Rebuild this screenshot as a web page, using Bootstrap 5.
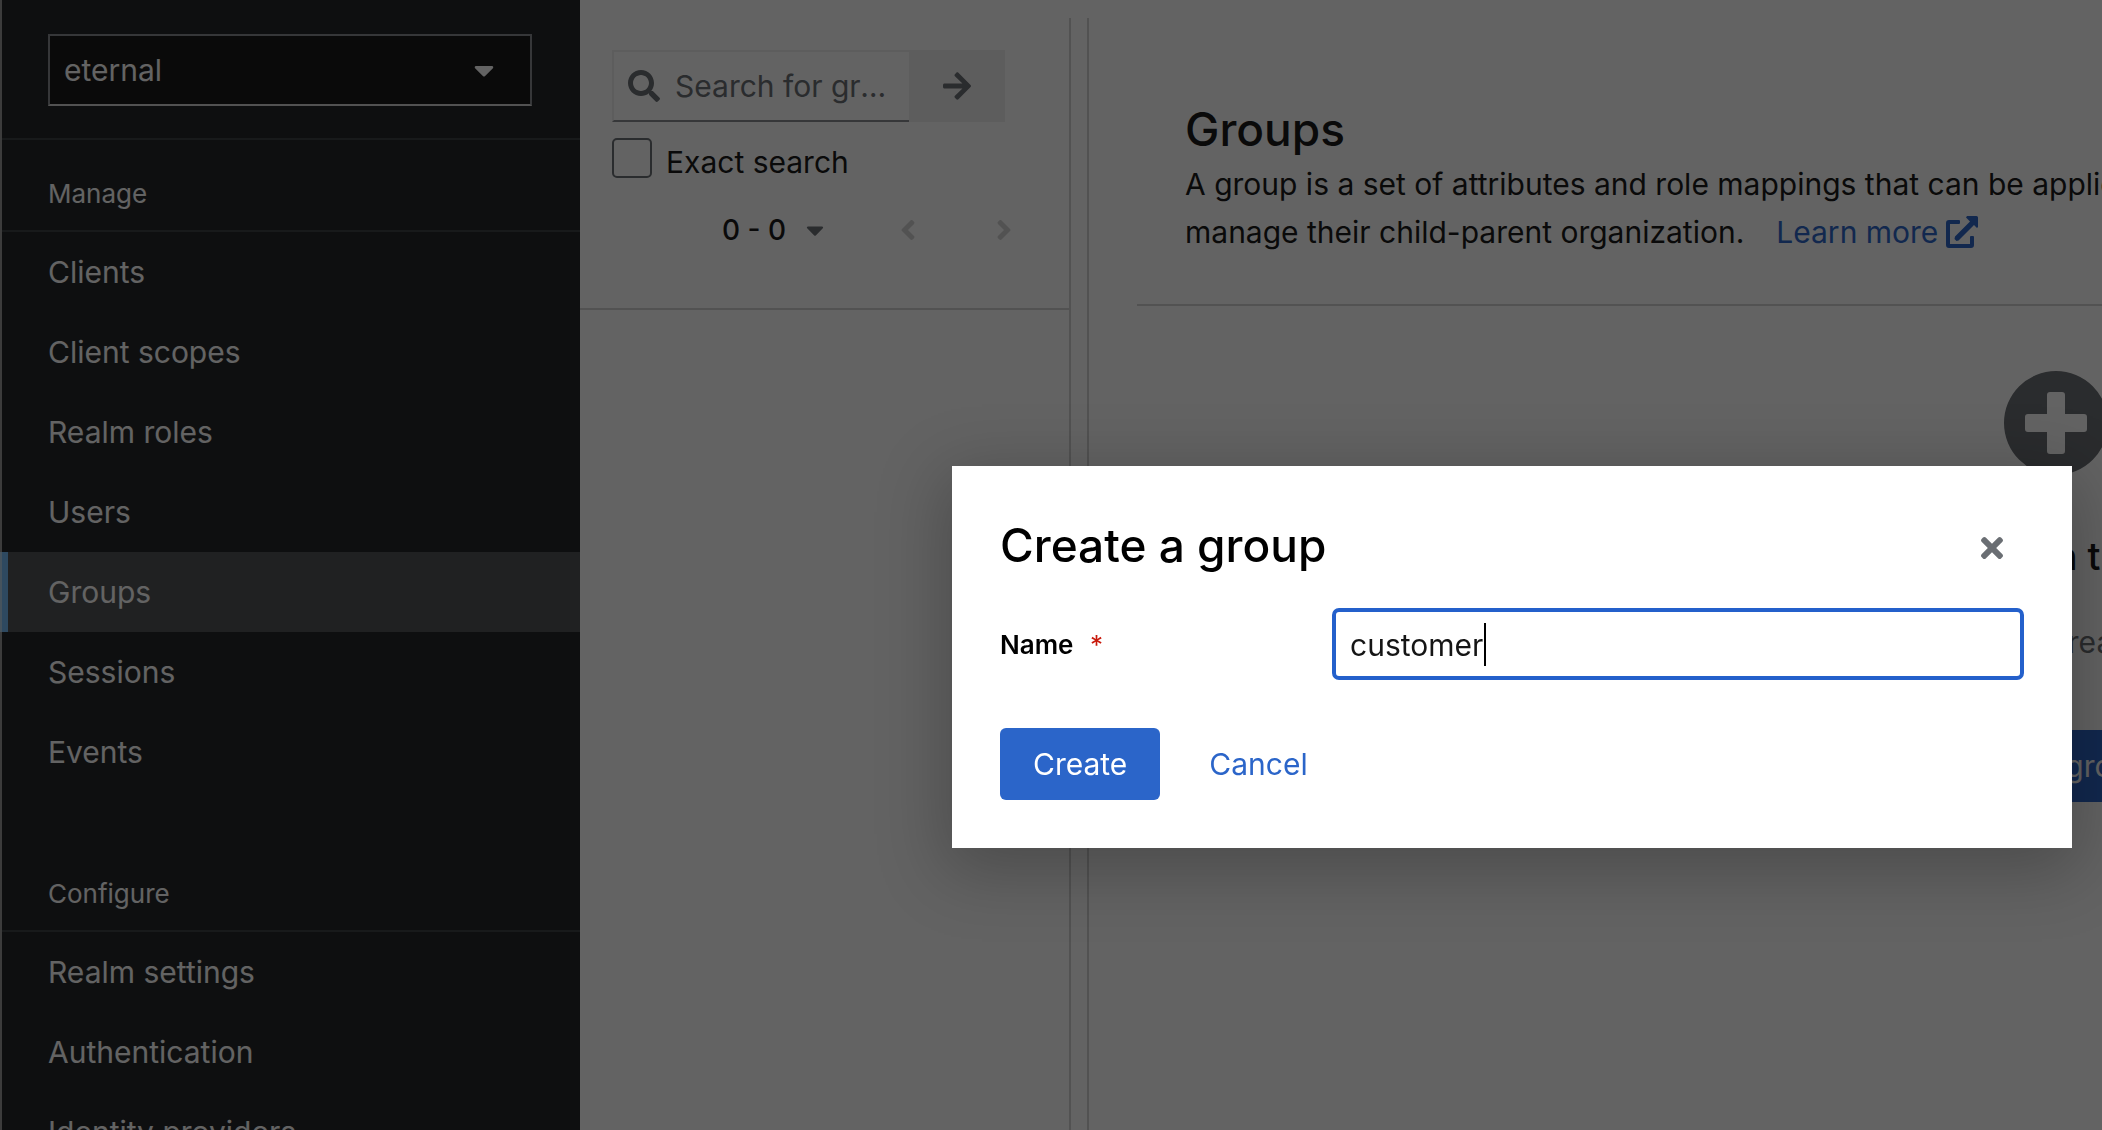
<!DOCTYPE html>
<html lang="en">
<head>
<meta charset="utf-8">
<meta name="viewport" content="width=device-width, initial-scale=1">
<title>Groups - Create a group</title>
<link href="https://cdn.jsdelivr.net/npm/bootstrap@5.3.0/dist/css/bootstrap.min.css" rel="stylesheet">
<style>
  :root {
    --canvas-w: calc(100vw + 922px);
    --kc-blue: #2b65c9;
    --kc-ink: #151515;
    --kc-muted: #6a6e73;
    --kc-line: #d2d2d2;
  }
  body {
    font-family: Inter, "Noto Sans", sans-serif;
    font-size: 30px;
    line-height: 48px;
    color: var(--kc-ink);
    background: #fff;
    overflow: hidden;
  }
  svg { fill: currentColor; display: block; }
  .shell { width: var(--canvas-w); height: 100vh; overflow: hidden; }

  /* sidebar */
  .sidebar { flex: 0 0 580px; background: #212427; color: #fff; border-left: 2px solid #9a9a9a; }
  .realm-box { padding: 34px 48px 32px 46px; border-bottom: 2px solid #3c3f42; }
  .realm-select {
    height: 72px; padding: 0 60px 0 14px; border-radius: 0;
    font-size: 30px; color: #fff; background: #151515;
    border: 2px solid #8a8d90; border-bottom-color: var(--kc-line);
  }
  .realm-caret { right: 38px; pointer-events: none; }
  .nav-heading { font-size: 26px; line-height: 42px; font-weight: 400; margin: 0; padding: 33px 46px 15px; border-bottom: 2px solid #3c3f42; }
  .side-nav .nav-link { color: #fff; padding: 16px 46px; border-radius: 0; }
  .side-nav .nav-link.active { background: #4f5255; box-shadow: inset 6px 0 0 #73bcf7; margin-left: -2px; border-left: 2px solid #b4d4ee; }

  /* group tree panel */
  .tree-panel { flex: 0 0 489px; }
  .tree-tools { padding: 50px 0 0 32px; height: 310px; border-bottom: 2px solid var(--kc-line); }
  .search-row { width: 393px; height: 72px; flex-wrap: nowrap; }
  .search-box { border: 2px solid #f0f0f0; border-right-width: 0; border-bottom-color: #8a8d90; padding-left: 14px; color: var(--kc-muted); }
  .search-box .form-control { border: 0; padding: 0 16px 0 15px; font-size: 30px; background: transparent; text-overflow: ellipsis; }
  .search-box .form-control::placeholder { color: var(--kc-muted); }
  .search-go { flex: 0 0 96px; background: #f0f0f0; color: var(--kc-muted); border-radius: 0; }
  .exact-row { margin-top: 16px; padding: 0; gap: 14px; min-height: 0; }
  .exact-row .form-check-input { width: 40px; height: 40px; margin: 0; float: none; border: 2px solid var(--kc-muted); border-radius: 5px; }
  .exact-row label { padding-top: 4px; line-height: 40px; }
  .pager { font-size: 28px; font-weight: 500; margin-top: 24px; padding-left: 110px; gap: 80px; }
  .pager button { padding: 0; border: 0; color: var(--kc-line); }
  .pager .per-page { font-size: 28px; font-weight: 500; line-height: 48px; color: var(--kc-ink); gap: 20px; margin-right: -4px; }
  .pager .per-page svg { color: var(--kc-muted); }
  .splitter { flex: 0 0 20px; margin-top: 18px; border: solid var(--kc-line); border-width: 0 2px; }

  /* main content */
  .page-title { font-size: 46px; line-height: 62px; font-weight: 500; margin: 0; }
  .page-head { padding: 98px 96px 48px; }
  .page-rule { margin-left: 48px; border-bottom: 2px solid var(--kc-line); }
  .kc-link { color: var(--kc-blue); text-decoration: none; }
  .empty { padding: 65px 2px 0 0; }
  .empty svg { color: var(--kc-muted); }
  .empty h2 { font-size: 38px; line-height: 48px; font-weight: 500; margin: 57px 0 0; }
  .empty p { color: var(--kc-muted); margin: 38px 0 64px; padding-right: 12px; }
  .kc-btn { font-size: 30px; line-height: 48px; padding: 12px 33px; border: 0; border-radius: 6px; }
  .kc-btn.btn-primary { background: var(--kc-blue); color: #fff; }

  /* dialog */
  .modal-backdrop.show { opacity: 1; background: rgba(3, 3, 3, .62); width: 100vw; }
  .modal { width: var(--canvas-w); overflow: hidden; }
  .modal-dialog { max-width: 1120px; margin: 466px auto 0; }
  .modal-content { border: 0; border-radius: 0; padding: 48px; color: #000; box-shadow: 0 16px 64px 8px rgba(3, 3, 3, .24); }
  .modal-title { font-size: 46px; line-height: 62px; font-weight: 500; }
  .close-x { color: var(--kc-muted); padding: 14px 21px 8px; }
  .name-row { margin-top: 32px; }
  .name-label { flex: 0 0 332px; font-size: 26px; font-weight: 600; padding-top: 2px; }
  .req { color: #c9190b; margin-left: 10px; font-weight: 400; }
  .name-input.form-control { height: 72px; border: 4px solid #2460cb; border-radius: 7px; padding: 1px 14px 0; font-size: 30px; color: var(--kc-ink); box-shadow: none; }
  .text-caret { left: 152px; top: 15px; width: 2px; height: 43px; background: #000; }
  .form-actions { margin-top: 48px; gap: 16px; }
</style>
</head>
<body>
<div class="shell d-flex">
  <nav class="sidebar" aria-label="Realm">
    <div class="realm-box">
      <div class="position-relative d-flex align-items-center">
        <select class="form-select realm-select w-100" aria-label="Realm"><option>eternal</option></select>
        <svg class="realm-caret position-absolute" width="20" height="32" viewBox="0 0 320 512"><path d="M31.3 192h257.3c17.8 0 26.7 21.5 14.1 34.1L174.1 354.8c-7.8 7.8-20.5 7.8-28.3 0L17.2 226.1C4.6 213.5 13.5 192 31.3 192z"/></svg>
      </div>
    </div>
    <h2 class="nav-heading">Manage</h2>
    <div class="side-nav nav flex-column mb-5">
      <a class="nav-link" href="#">Clients</a>
      <a class="nav-link" href="#">Client scopes</a>
      <a class="nav-link" href="#">Realm roles</a>
      <a class="nav-link" href="#">Users</a>
      <a class="nav-link active" href="#" aria-current="page">Groups</a>
      <a class="nav-link" href="#">Sessions</a>
      <a class="nav-link" href="#">Events</a>
    </div>
    <h2 class="nav-heading">Configure</h2>
    <div class="side-nav nav flex-column">
      <a class="nav-link" href="#">Realm settings</a>
      <a class="nav-link" href="#">Authentication</a>
      <a class="nav-link" href="#">Identity providers</a>
    </div>
  </nav>

  <section class="tree-panel" aria-label="Group search">
    <div class="tree-tools">
      <div class="search-row d-flex">
        <div class="search-box d-flex align-items-center flex-grow-1">
          <svg class="flex-shrink-0" width="32" height="32" viewBox="0 0 512 512"><path d="M505 442.7L405.3 343c-4.5-4.5-10.6-7-17-7H372c27.6-35.3 44-79.7 44-128C416 93.1 322.9 0 208 0S0 93.1 0 208s93.1 208 208 208c48.3 0 92.7-16.4 128-44v16.3c0 6.4 2.5 12.5 7 17l99.7 99.7c9.4 9.4 24.6 9.4 33.9 0l28.3-28.3c9.4-9.4 9.4-24.6.1-34zM208 336c-70.7 0-128-57.2-128-128 0-70.7 57.2-128 128-128 70.7 0 128 57.2 128 128 0 70.7-57.2 128-128 128z"/></svg>
          <input class="form-control" type="text" placeholder="Search for groups" aria-label="Search for groups">
        </div>
        <button class="btn search-go d-flex align-items-center justify-content-center p-0" type="button" aria-label="Search">
          <svg width="28" height="32" viewBox="0 0 448 512"><path d="M190.5 66.9l22.2-22.2c9.4-9.4 24.6-9.4 33.9 0L441 239c9.4 9.4 9.4 24.6 0 33.9L246.6 467.3c-9.4 9.4-24.6 9.4-33.9 0l-22.2-22.2c-9.5-9.5-9.3-25 .4-34.3L311.4 296H24c-13.3 0-24-10.7-24-24v-32c0-13.3 10.7-24 24-24h287.4L190.9 101.2c-9.8-9.3-10-24.8-.4-34.3z"/></svg>
        </button>
      </div>
      <div class="form-check exact-row d-flex">
        <input class="form-check-input" type="checkbox" id="exact">
        <label for="exact">Exact search</label>
      </div>
      <div class="pager d-flex align-items-center">
        <button class="btn per-page d-flex align-items-center" type="button">0 - 0
          <svg width="18" height="28" viewBox="0 0 320 512"><path d="M31.3 192h257.3c17.8 0 26.7 21.5 14.1 34.1L174.1 354.8c-7.8 7.8-20.5 7.8-28.3 0L17.2 226.1C4.6 213.5 13.5 192 31.3 192z"/></svg>
        </button>
        <button class="btn" type="button" aria-label="Previous page">
          <svg width="16" height="32" viewBox="0 0 256 512"><path transform="matrix(-1 0 0 1 256 0)" d="M224.3 273l-136 136c-9.4 9.4-24.6 9.4-33.9 0l-22.6-22.6c-9.4-9.4-9.4-24.6 0-33.9l96.4-96.4-96.4-96.4c-9.4-9.4-9.4-24.6 0-33.9L54.3 103c9.4-9.4 24.6-9.4 33.9 0l136 136c9.5 9.4 9.5 24.6.1 34z"/></svg>
        </button>
        <button class="btn" type="button" aria-label="Next page">
          <svg width="16" height="32" viewBox="0 0 256 512"><path d="M224.3 273l-136 136c-9.4 9.4-24.6 9.4-33.9 0l-22.6-22.6c-9.4-9.4-9.4-24.6 0-33.9l96.4-96.4-96.4-96.4c-9.4-9.4-9.4-24.6 0-33.9L54.3 103c9.4-9.4 24.6-9.4 33.9 0l136 136c9.5 9.4 9.5 24.6.1 34z"/></svg>
        </button>
      </div>
    </div>
  </section>

  <div class="splitter"></div>

  <main class="flex-grow-1">
    <div class="page-head">
      <h1 class="page-title">Groups</h1>
      <div>A group is a set of attributes and role mappings that can be applied to a user. You can create, edit, and delete groups and<br>
        <span class="d-flex">manage their child-parent organization.
          <a class="kc-link d-flex align-items-center gap-2 ms-4 ps-2" href="#">Learn more
            <svg width="32" height="32" viewBox="0 0 32 32"><path d="M12 4H3a3 3 0 0 0-3 3v22a3 3 0 0 0 3 3h22a3 3 0 0 0 3-3v-8a1 1 0 0 0-1-1h-2a1 1 0 0 0-1 1v7H4V8h9a1 1 0 0 0 1-1V5a1 1 0 0 0-1-1zM21 0h9.500a1.500 1.500 0 0 1 1.500 1.500V11l-1 1-3-3L12.500 24.500l-2 .500-2-2 .500-2.500L24 5.500 20 1.500z"/></svg>
          </a></span>
      </div>
    </div>
    <div class="page-rule"></div>
    <div class="empty d-flex flex-column align-items-center">
      <svg width="104" height="104" viewBox="0 0 104 104"><path fill-rule="evenodd" d="M52 0a52 52 0 1 0 0 104A52 52 0 0 0 52 0zM46 21h12a3 3 0 0 1 3 3v19h19a3 3 0 0 1 3 3v12a3 3 0 0 1-3 3H61v19a3 3 0 0 1-3 3H46a3 3 0 0 1-3-3V61H24a3 3 0 0 1-3-3V46a3 3 0 0 1 3-3h19V24a3 3 0 0 1 3-3z"/></svg>
      <h2>No groups in this realm</h2>
      <p>You haven't created any groups in this realm. Create a group to get started.</p>
      <button class="btn btn-primary kc-btn" type="button">Create group</button>
    </div>
  </main>
</div>

<div class="modal-backdrop show"></div>
<div class="modal d-block" role="dialog" aria-modal="true" aria-labelledby="dlg-title">
  <div class="modal-dialog">
    <form class="modal-content">
      <div class="d-flex justify-content-between align-items-center">
        <h1 class="modal-title" id="dlg-title">Create a group</h1>
        <button class="btn close-x border-0" type="button" aria-label="Close">
          <svg width="22" height="32" viewBox="0 0 352 512"><path d="M242.72 256l100.07-100.07c12.28-12.28 12.28-32.19 0-44.48l-22.24-22.24c-12.28-12.28-32.19-12.28-44.48 0L176 189.28 75.93 89.21c-12.28-12.28-32.19-12.28-44.48 0L9.21 111.45c-12.28 12.28-12.28 32.19 0 44.48L109.28 256 9.21 356.07c-12.28 12.28-12.28 32.19 0 44.48l22.24 22.24c12.28 12.28 32.2 12.28 44.48 0L176 322.72l100.07 100.07c12.28 12.28 32.2 12.28 44.48 0l22.24-22.24c12.28-12.28 12.28-32.19 0-44.48L242.72 256z"/></svg>
        </button>
      </div>
      <div class="name-row d-flex align-items-center">
        <label class="name-label" for="name">Name <span class="req">*</span></label>
        <div class="position-relative flex-grow-1">
          <input class="form-control name-input" type="text" id="name" value="customer" required>
          <span class="text-caret position-absolute"></span>
        </div>
      </div>
      <div class="form-actions d-flex">
        <button class="btn btn-primary kc-btn" type="submit">Create</button>
        <button class="btn btn-link kc-btn kc-link" type="button">Cancel</button>
      </div>
    </form>
  </div>
</div>
<script src="https://cdn.jsdelivr.net/npm/bootstrap@5.3.0/dist/js/bootstrap.bundle.min.js"></script>
</body>
</html>
